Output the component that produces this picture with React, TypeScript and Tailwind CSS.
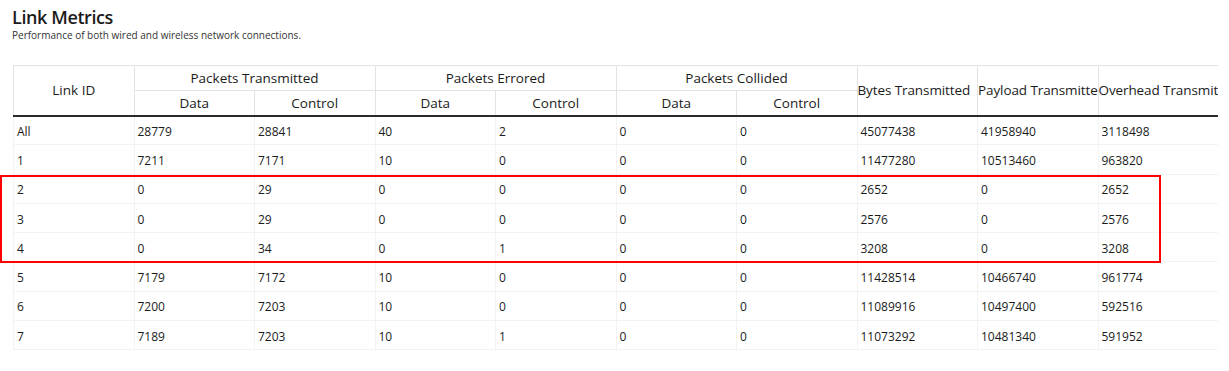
import React from "react";

const rows: (string | number)[][] = [
  ["All", 28779, 28841, 40, 2, 0, 0, 45077438, 41958940, 3118498],
  ["1", 7211, 7171, 10, 0, 0, 0, 11477280, 10513460, 963820],
  ["2", 0, 29, 0, 0, 0, 0, 2652, 0, 2652],
  ["3", 0, 29, 0, 0, 0, 0, 2576, 0, 2576],
  ["4", 0, 34, 0, 1, 0, 0, 3208, 0, 3208],
  ["5", 7179, 7172, 10, 0, 0, 0, 11428514, 10466740, 961774],
  ["6", 7200, 7203, 10, 0, 0, 0, 11089916, 10497400, 592516],
  ["7", 7189, 7203, 10, 1, 0, 0, 11073292, 10481340, 591952],
];

const th = "border border-[#e3e3e3] font-normal text-center whitespace-nowrap overflow-hidden p-0";

export default function App() {
  return (
    <div className="relative w-[1229px] h-[371px] bg-white text-[#1b1b1b] font-['Open_Sans',sans-serif]">
      <div className="pl-3 pt-[5px]">
        <h1 className="text-[18px] font-semibold leading-[24px] tracking-[-0.4px]">Link Metrics</h1>
        <p className="text-[10px] leading-[13px] text-[#333]">Performance of both wired and wireless network connections.</p>
      </div>
      <div className="ml-[13px] mt-[23px] w-[1205px] overflow-hidden">
        <table className="table-fixed border-collapse w-[1205px]">
          <colgroup>
            {Array.from({ length: 10 }).map((_, i) => (
              <col key={i} className="w-[120.5px]" />
            ))}
          </colgroup>
          <thead className="text-[13.5px]">
            <tr className="h-[25px]">
              <th rowSpan={2} className={th + " border-b-2 border-b-[#2a2a2a]"}>Link ID</th>
              <th colSpan={2} className={th}>Packets Transmitted</th>
              <th colSpan={2} className={th}>Packets Errored</th>
              <th colSpan={2} className={th}>Packets Collided</th>
              <th rowSpan={2} className={th + " text-left border-b-2 border-b-[#2a2a2a]"}><div className="overflow-hidden whitespace-nowrap tracking-[-0.1px]">Bytes Transmitted</div></th>
              <th rowSpan={2} className={th + " text-left border-b-2 border-b-[#2a2a2a]"}><div className="overflow-hidden whitespace-nowrap tracking-[-0.1px]">Payload Transmitted</div></th>
              <th rowSpan={2} className={th + " text-left border-b-2 border-b-[#2a2a2a]"}><div className="overflow-hidden whitespace-nowrap tracking-[-0.1px]">Overhead Transmitted</div></th>
            </tr>
            <tr className="h-[25px]">
              {["Data", "Control", "Data", "Control", "Data", "Control"].map((t, i) => (
                <th key={i} className={th + " border-b-2 border-b-[#2a2a2a]"}>{t}</th>
              ))}
            </tr>
          </thead>
          <tbody className="text-[12px]">
            {rows.map((r, ri) => (
              <tr key={ri} className="h-[29.3px]">
                {r.map((c, ci) => (
                  <td key={ci} className="border border-[#f3f3f3] px-[3px] pt-[3px] pb-0 text-left whitespace-nowrap overflow-hidden">
                    {c}
                  </td>
                ))}
              </tr>
            ))}
          </tbody>
        </table>
      </div>
      <div className="absolute left-0 top-[175px] w-[1161px] h-[88px] border-2 border-[#ff0000] pointer-events-none" />
    </div>
  );
}
